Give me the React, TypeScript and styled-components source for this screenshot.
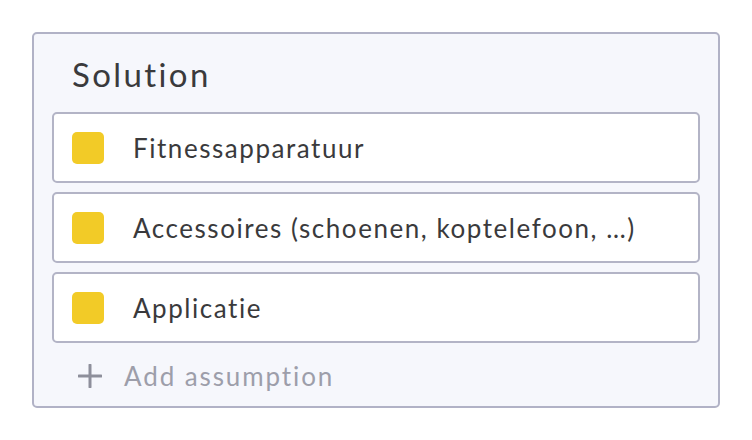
import React from "react";
import styled, { createGlobalStyle } from "styled-components";

const Global = createGlobalStyle`
  html, body { margin: 0; padding: 0; background: #ffffff; }
  body { font-family: "Lato", "Open Sans", sans-serif; }
`;

const Page = styled.div`
  padding: 32px;
`;

const Panel = styled.section`
  box-sizing: border-box;
  width: 688px;
  height: 376px;
  border: 2px solid #b1b2c6;
  border-radius: 5px;
  background: #f6f7fc;
  padding: 0 18px;
  display: flex;
  flex-direction: column;
`;

const Title = styled.h2`
  margin: 0;
  height: 78px;
  padding: 20px 0 0 20px;
  box-sizing: border-box;
  font-size: 33px;
  font-weight: 400;
  line-height: 40px;
  color: #3a3a3c;
  letter-spacing: 2.4px;
`;

const List = styled.div`
  display: flex;
  flex-direction: column;
  gap: 9px;
`;

const Card = styled.div`
  box-sizing: border-box;
  height: 71px;
  border: 2px solid #b3b4c6;
  border-radius: 5px;
  background: #ffffff;
  display: flex;
  align-items: center;
  padding: 0 18px;
  gap: 29px;
`;

const Swatch = styled.span<{ $color: string }>`
  width: 32px;
  height: 32px;
  border-radius: 5px;
  background: ${(p) => p.$color};
  flex: none;
`;

const Label = styled.span`
  font-size: 26px;
  font-weight: 400;
  color: #3a3a3c;
  letter-spacing: 1.55px;
`;

const AddRow = styled.button`
  margin-top: 8px;
  height: 50px;
  border: none;
  background: transparent;
  display: flex;
  align-items: center;
  gap: 22px;
  padding: 0 0 0 26px;
  cursor: pointer;
  font-family: inherit;
  font-size: 26px;
  color: #9d9eaa;
  letter-spacing: 1.9px;
`;

const items = [
  "Fitnessapparatuur",
  "Accessoires (schoenen, koptelefoon, …)",
  "Applicatie",
];

export default function App() {
  return (
    <>
      <Global />
      <Page>
        <Panel>
          <Title>Solution</Title>
          <List>
            {items.map((t) => (
              <Card key={t}>
                <Swatch $color="#f2cb27" />
                <Label>{t}</Label>
              </Card>
            ))}
          </List>
          <AddRow>
            <svg width="24" height="24" viewBox="0 0 24 24">
              <path d="M12 1v22M1 12h22" stroke="#8e8f9b" strokeWidth="3" strokeLinecap="round" />
            </svg>
            Add assumption
          </AddRow>
        </Panel>
      </Page>
    </>
  );
}
